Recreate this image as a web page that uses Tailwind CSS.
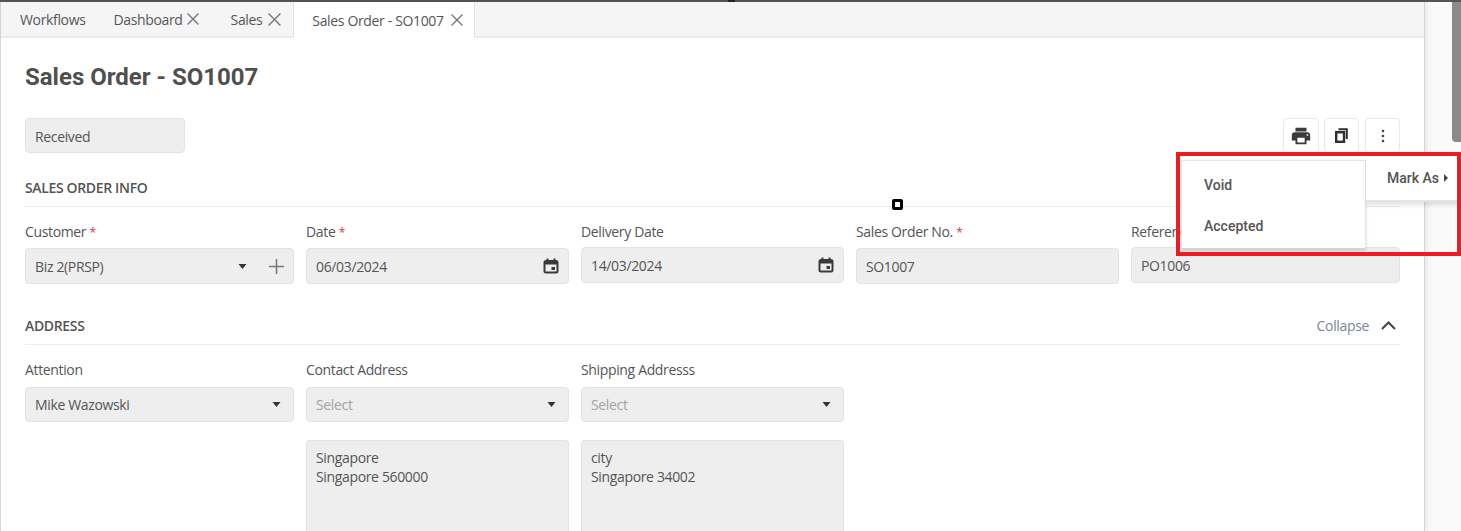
<!DOCTYPE html>
<html lang="en">
<head>
    <meta charset="UTF-8">
    <title>Sales Order - SO1007</title>
    <script src="https://cdn.jsdelivr.net/npm/@tailwindcss/browser@4"></script>
</head>
<body class="relative h-[531px] w-[1461px] overflow-hidden bg-[#fafafa] font-['Open_Sans',sans-serif] text-[14px] tracking-[-0.35px] text-[#555]">
    <div class="h-[2px] bg-[#555]"></div>
    <div class="flex h-[529px]">
        <div class="h-full w-[1425px] flex-shrink-0 overflow-hidden border-r border-l border-[#d4d4d4] bg-white shadow-[2px_0_6px_rgba(0,0,0,0.08)]">
            <!-- tabs -->
            <div class="flex h-[36px] items-stretch border-b-2 border-[#ececec] bg-[#f5f5f5]">
                <div class="flex items-center pr-[28px] pl-[19px]">Workflows</div>
                <div class="flex items-center gap-[4px] pr-[22px]">Dashboard
                    <svg class="h-[12px] w-[12px] text-[#777]" viewBox="0 0 12 12" fill="none" stroke="currentColor" stroke-width="1.4"><path d="M.5.5l11 11M11.500.5l-11 11"/></svg>
                </div>
                <div class="flex items-center gap-[6px] pr-[12px] pl-[10px]">Sales
                    <svg class="h-[13px] w-[13px] text-[#777]" viewBox="0 0 12 12" fill="none" stroke="currentColor" stroke-width="1.3"><path d="M.5.5l11 11M11.500.5l-11 11"/></svg>
                </div>
                <div class="-mb-[2px] flex items-center gap-[7px] border-r border-l border-[#e0e0e0] bg-white pr-[11px] pl-[18px]">Sales Order - SO1007
                    <svg class="h-[12px] w-[12px] text-[#777]" viewBox="0 0 12 12" fill="none" stroke="currentColor" stroke-width="1.4"><path d="M.5.5l11 11M11.500.5l-11 11"/></svg>
                </div>
            </div>

            <div class="pr-[24px] pl-[24px]">
                <h1 class="mt-[22px] font-['Roboto',sans-serif] text-[24px] leading-[34px] font-bold tracking-normal text-[#4f4f4f]">Sales Order - SO1007</h1>

                <div class="mt-[24px] flex items-start justify-between">
                    <div class="flex h-[35px] w-[160px] items-center rounded-[4px] border border-[#e3e3e3] bg-[#eeeeee] px-[9px] pt-[1px]">Received</div>
                    <div class="flex gap-[5px]">
                        <div class="flex h-[35px] w-[36px] items-center justify-center rounded-[4px] border border-[#e8e8e8] bg-white">
                            <svg class="h-[22px] w-[22px] text-[#3a3a3a]" viewBox="0 0 24 24" fill="currentColor"><path d="M19 8H5c-1.660 0-3 1.340-3 3v6h4v4h12v-4h4v-6c0-1.660-1.340-3-3-3zm-3 11H8v-5h8v5zm3-7c-.550 0-1-.450-1-1s.450-1 1-1 1 .450 1 1-.450 1-1 1zm-1-9H6v4h12V3z"/></svg>
                        </div>
                        <div class="flex h-[35px] w-[35px] items-center justify-center rounded-[4px] border border-[#e8e8e8] bg-white">
                            <svg class="h-[15px] w-[13px] text-[#2f2f2f]" viewBox="0 0 13 15" fill="none" stroke="currentColor"><rect x="1.200" y="4.200" width="7.800" height="9.600" stroke-width="2.400"/><path d="M3.500 1.200h8.300v9.800" stroke-width="2"/></svg>
                        </div>
                        <div class="ml-[1px] flex h-[35px] w-[35px] items-center justify-center rounded-[4px] border border-[#e8e8e8] bg-white">
                            <svg class="h-[14px] w-[4px] text-[#444]" viewBox="0 0 4 14" fill="currentColor"><circle cx="2" cy="2" r="1.300"/><circle cx="2" cy="7" r="1.300"/><circle cx="2" cy="12" r="1.300"/></svg>
                        </div>
                    </div>
                </div>

                <!-- sales order info -->
                <div class="mt-[25px] border-b border-[#eeeeee] pb-[9px] text-[14px] leading-[19px] font-semibold">SALES ORDER INFO</div>
                <div class="mt-[15px] grid grid-cols-[269px_263px_263px_263px_269px] gap-x-[12px]">
                    <div>
                        <div class="mb-[6px] leading-[19px]">Customer <span class="text-[12px] text-[#d9363e]">*</span></div>
                        <div class="flex h-[36px] items-center rounded-[4px] border border-[#e3e3e3] bg-[#eeeeee] pr-[9px] pl-[9px]">
                            <span class="flex-1">Biz 2(PRSP)</span>
                            <svg class="mr-[22px] h-[5px] w-[9px] text-[#333]" viewBox="0 0 8 5" fill="currentColor"><path d="M0 0h8L4 5z"/></svg>
                            <svg class="h-[15px] w-[15px] text-[#777]" viewBox="0 0 14 14" fill="none" stroke="currentColor" stroke-width="1.400"><path d="M7 0v14M0 7h14"/></svg>
                        </div>
                    </div>
                    <div>
                        <div class="mb-[6px] leading-[19px]">Date <span class="text-[12px] text-[#d9363e]">*</span></div>
                        <div class="flex h-[36px] items-center justify-between rounded-[4px] border border-[#e3e3e3] bg-[#eeeeee] pr-[9px] pl-[9px]">06/03/2024
                            <svg class="h-[16px] w-[16px] text-[#3a3a3a]" viewBox="0 0 16 16" fill="none" stroke="currentColor"><rect x="1.500" y="3" width="13" height="11.500" rx="1.500" stroke-width="2"/><path d="M1 5h14" stroke-width="3"/><path d="M4.500 .500v3M11.500 .500v3" stroke-width="2"/><rect x="8.500" y="9" width="3.500" height="3" fill="currentColor" stroke="none"/></svg>
                        </div>
                    </div>
                    <div>
                        <div class="mb-[6px] leading-[19px]">Delivery Date</div>
                        <div class="flex h-[36px] items-center justify-between rounded-[4px] border border-[#e3e3e3] bg-[#eeeeee] pr-[9px] pl-[9px]">14/03/2024
                            <svg class="h-[16px] w-[16px] text-[#3a3a3a]" viewBox="0 0 16 16" fill="none" stroke="currentColor"><rect x="1.500" y="3" width="13" height="11.500" rx="1.500" stroke-width="2"/><path d="M1 5h14" stroke-width="3"/><path d="M4.500 .500v3M11.500 .500v3" stroke-width="2"/><rect x="8.500" y="9" width="3.500" height="3" fill="currentColor" stroke="none"/></svg>
                        </div>
                    </div>
                    <div>
                        <div class="mb-[6px] leading-[19px]">Sales Order No. <span class="text-[12px] text-[#d9363e]">*</span></div>
                        <div class="flex h-[36px] items-center rounded-[4px] border border-[#e3e3e3] bg-[#eeeeee] px-[9px]">SO1007</div>
                    </div>
                    <div>
                        <div class="mb-[6px] leading-[19px]">Reference</div>
                        <div class="flex h-[36px] items-center rounded-[4px] border border-[#e3e3e3] bg-[#eeeeee] px-[9px]">PO1006</div>
                    </div>
                </div>

                <!-- address -->
                <div class="mt-[32px] flex items-center justify-between border-b border-[#eeeeee] pb-[9px] leading-[19px]">
                    <span class="font-semibold">ADDRESS</span>
                    <span class="flex items-center gap-[12px] pr-[4px] text-[#7b8794]">Collapse
                        <svg class="h-[9px] w-[15px] text-[#444]" viewBox="0 0 15 9" fill="none" stroke="currentColor" stroke-width="2"><path d="M1 8l6.500-6.500L14 8"/></svg>
                    </span>
                </div>
                <div class="mt-[15px] grid grid-cols-[269px_263px_263px] gap-x-[12px]">
                    <div>
                        <div class="mb-[8px] leading-[19px]">Attention</div>
                        <div class="flex h-[35px] items-center justify-between rounded-[4px] border border-[#e3e3e3] bg-[#eeeeee] pr-[12px] pl-[9px]">Mike Wazowski
                            <svg class="h-[5px] w-[9px] text-[#333]" viewBox="0 0 8 5" fill="currentColor"><path d="M0 0h8L4 5z"/></svg>
                        </div>
                    </div>
                    <div>
                        <div class="mb-[8px] leading-[19px]">Contact Address</div>
                        <div class="flex h-[35px] items-center justify-between rounded-[4px] border border-[#e3e3e3] bg-[#eeeeee] pr-[12px] pl-[9px] text-[#a3a3a3]">Select
                            <svg class="h-[5px] w-[9px] text-[#333]" viewBox="0 0 8 5" fill="currentColor"><path d="M0 0h8L4 5z"/></svg>
                        </div>
                        <div class="mt-[18px] h-[91px] rounded-t-[4px] border border-b-0 border-[#e3e3e3] bg-[#eeeeee] px-[9px] pt-[7px] leading-[19px]">Singapore<br>Singapore 560000</div>
                    </div>
                    <div>
                        <div class="mb-[8px] leading-[19px]">Shipping Addresss</div>
                        <div class="flex h-[35px] items-center justify-between rounded-[4px] border border-[#e3e3e3] bg-[#eeeeee] pr-[12px] pl-[9px] text-[#a3a3a3]">Select
                            <svg class="h-[5px] w-[9px] text-[#333]" viewBox="0 0 8 5" fill="currentColor"><path d="M0 0h8L4 5z"/></svg>
                        </div>
                        <div class="mt-[18px] h-[91px] rounded-t-[4px] border border-b-0 border-[#e3e3e3] bg-[#eeeeee] px-[9px] pt-[7px] leading-[19px]">city<br>Singapore 34002</div>
                    </div>
                </div>
            </div>
        </div>
        <div class="flex-1"></div>
        <div class="h-[140px] w-[9px] rounded-bl-[4px] bg-[#8a8a8a]"></div>
    </div>

    <!-- dropdown menus -->
    <div class="absolute top-[160px] left-[1181px] h-[90px] w-[185px] border border-b-[2px] border-[#e6e6e6] border-b-[#d4d4d4] bg-white font-['Roboto',sans-serif] text-[14px] font-medium tracking-normal shadow-[0_1px_3px_rgba(0,0,0,0.15)]">
        <div class="pt-[14px] pl-[22px] leading-[20px]">Void</div>
        <div class="pt-[21px] pl-[22px] leading-[20px]">Accepted</div>
    </div>
    <div class="absolute top-[156px] left-[1366px] flex h-[46px] w-[95px] items-center gap-[5px] rounded-tl-[4px] border-b-[2px] border-[#e4e4e4] bg-white pl-[21px] font-['Roboto',sans-serif] text-[14px] font-medium tracking-normal whitespace-nowrap shadow-[0_3px_5px_rgba(0,0,0,0.12)]">Mark As
        <svg class="h-[8px] w-[4px] text-[#444]" viewBox="0 0 4 8" fill="currentColor"><path d="M0 0l4 4-4 4z"/></svg>
    </div>

    <!-- annotation -->
    <div class="pointer-events-none absolute top-[152px] left-[1176px] h-[104px] w-[285px] border-[4px] border-[#ed1c24]"></div>
    <div class="absolute top-[199px] left-[892px] h-[11px] w-[11px] rounded-[2px] border-[3px] border-black bg-white"></div>
    <div class="absolute top-0 left-[728px] h-[2px] w-[7px] bg-[#222]"></div>
</body>
</html>
